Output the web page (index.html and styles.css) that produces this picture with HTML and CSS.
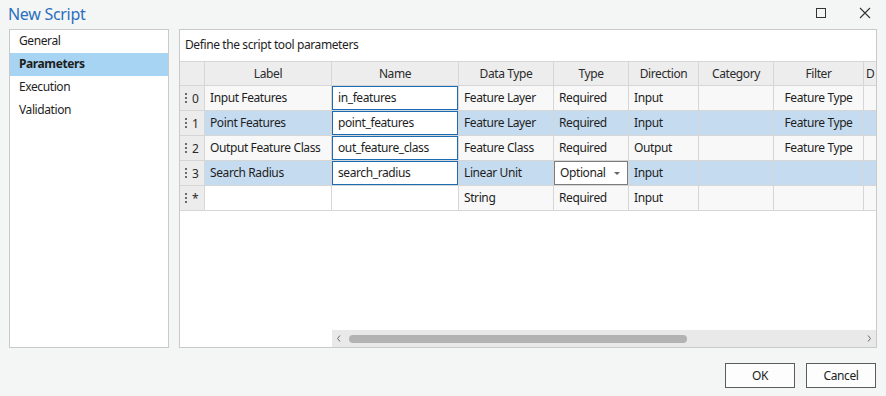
FILE: index.html
```html
<!DOCTYPE html>
<html lang="en">
<head>
  <meta charset="UTF-8">
  <title>New Script</title>
  <link rel="stylesheet" href="styles.css">
</head>
<body>

  <!-- Title bar -->
  <div class="titlebar">
    <div class="title">New Script</div>
    <div class="controls">
      <svg width="12" height="12" viewBox="0 0 12 12"><rect x="1.5" y="1.5" width="9" height="9" fill="none" stroke="#333" stroke-width="1"/></svg>
      <svg width="12" height="12" viewBox="0 0 12 12"><path d="M1 1 L11 11 M11 1 L1 11" stroke="#333" stroke-width="1.1"/></svg>
    </div>
  </div>

  <div class="main">
    <!-- Page list -->
    <div class="nav">
      <div class="nav-item">General</div>
      <div class="nav-item active">Parameters</div>
      <div class="nav-item">Execution</div>
      <div class="nav-item">Validation</div>
    </div>

    <!-- Parameters page -->
    <div class="panel">
      <div class="desc">Define the script tool parameters</div>
      <div class="grid-wrap">
        <div class="grid">
          <div class="hd"></div>
          <div class="hd">Label</div>
          <div class="hd">Name</div>
          <div class="hd">Data Type</div>
          <div class="hd">Type</div>
          <div class="hd">Direction</div>
          <div class="hd">Category</div>
          <div class="hd">Filter</div>
          <div class="hd left">D</div>

          <div class="handle"><span class="grip"></span>0</div>
          <div class="c">Input Features</div>
          <div class="c edit">in_features</div>
          <div class="c">Feature Layer</div>
          <div class="c">Required</div>
          <div class="c">Input</div>
          <div class="c"></div>
          <div class="c center">Feature Type</div>
          <div class="c"></div>

          <div class="handle"><span class="grip"></span>1</div>
          <div class="c sel">Point Features</div>
          <div class="c edit">point_features</div>
          <div class="c sel">Feature Layer</div>
          <div class="c sel">Required</div>
          <div class="c sel">Input</div>
          <div class="c sel"></div>
          <div class="c sel center">Feature Type</div>
          <div class="c sel"></div>

          <div class="handle"><span class="grip"></span>2</div>
          <div class="c">Output Feature Class</div>
          <div class="c edit">out_feature_class</div>
          <div class="c">Feature Class</div>
          <div class="c">Required</div>
          <div class="c">Output</div>
          <div class="c"></div>
          <div class="c center">Feature Type</div>
          <div class="c"></div>

          <div class="handle"><span class="grip"></span>3</div>
          <div class="c sel">Search Radius</div>
          <div class="c edit">search_radius</div>
          <div class="c sel">Linear Unit</div>
          <div class="c combo">Optional<span class="arrow"></span></div>
          <div class="c sel">Input</div>
          <div class="c sel"></div>
          <div class="c sel"></div>
          <div class="c sel"></div>

          <div class="handle"><span class="grip"></span>*</div>
          <div class="c blank"></div>
          <div class="c blank"></div>
          <div class="c">String</div>
          <div class="c">Required</div>
          <div class="c">Input</div>
          <div class="c"></div>
          <div class="c"></div>
          <div class="c"></div>
        </div>
      </div>
      <div class="hscroll">
        <div class="frozen"></div>
        <div class="track">
          <svg class="arr" width="14" height="17" viewBox="0 0 14 17"><path d="M8 5.5 L5.5 8.5 L8 11.5" fill="none" stroke="#666" stroke-width="1"/></svg>
          <div class="thumb-area"><div class="thumb"></div></div>
          <svg class="arr" width="14" height="17" viewBox="0 0 14 17"><path d="M6 5.5 L8.5 8.5 L6 11.5" fill="none" stroke="#666" stroke-width="1"/></svg>
        </div>
      </div>
    </div>
  </div>

  <!-- Buttons -->
  <div class="footer">
    <button class="btn">OK</button>
    <button class="btn">Cancel</button>
  </div>

</body>
</html>
```

FILE: styles.css
```css
body {
  margin: 0;
  width: 886px;
  height: 396px;
  background-color: #f4f6f5;
  font-family: "Noto Sans", "Open Sans", sans-serif;
  font-size: 12px;
  letter-spacing: -0.4px;
  color: #1e1e1e;
  overflow: hidden;
}

/* Title bar */
.titlebar {
  height: 29px;
  display: flex;
  align-items: center;
  justify-content: space-between;
  padding: 0 15px 0 8px;
}

.title {
  font-size: 16px;
  letter-spacing: -0.3px;
  color: #2a6fbd;
  margin-top: -2px;
}

.controls {
  display: flex;
  gap: 32px;
  margin-top: -4px;
}

/* Main area */
.main {
  display: flex;
  gap: 10px;
  padding: 0 9px;
  height: 319px;
}

.nav {
  width: 158px;
  border: 1px solid #c9c9c9;
  background: #fff;
}

.nav-item {
  height: 23px;
  line-height: 22px;
  padding-left: 9px;
}

.nav-item.active {
  background: #a6d4f2;
  font-weight: bold;
}

.panel {
  flex: 1;
  min-width: 0;
  border: 1px solid #c9c9c9;
  background: #fff;
  display: flex;
  flex-direction: column;
}

.desc {
  height: 31px;
  line-height: 30px;
  padding-left: 5px;
  border-bottom: 1px solid #d6d6d6;
}

/* Parameter grid */
.grid-wrap {
  flex: 1;
  overflow: hidden;
}

.grid {
  display: grid;
  grid-template-columns: 24px 126px 126px 94px 74px 69px 74px 89px 120px;
  grid-template-rows: 23px repeat(5, 24px);
  gap: 1px;
  background: #d6d6d6;
  border-bottom: 1px solid #d6d6d6;
  width: max-content;
}

.hd {
  background: #ededed;
  color: #2b2b2b;
  text-align: center;
  line-height: 23px;
  white-space: nowrap;
  overflow: hidden;
}

.hd.left {
  text-align: left;
  padding-left: 2px;
}

.handle {
  background: #ececec;
  display: flex;
  align-items: center;
  padding-left: 5px;
  gap: 5px;
  color: #2b2b2b;
}

.grip {
  width: 2px;
  height: 10px;
  background: repeating-linear-gradient(to bottom, #6b6b6b 0 2px, transparent 2px 4px);
}

.c {
  background: #f8f8f8;
  padding-left: 5px;
  line-height: 24px;
  white-space: nowrap;
  overflow: hidden;
  box-sizing: border-box;
}

.c.sel {
  background: #c5dbef;
}

.c.blank {
  background: #fff;
}

.c.center {
  text-align: center;
  padding-left: 0;
}

.c.edit {
  background: #fff;
  border: 1px solid #1c6bb5;
  line-height: 22px;
}

.c.combo {
  background: #fff;
  border: 1px solid #7c7c7c;
  line-height: 22px;
  position: relative;
}

.arrow {
  position: absolute;
  right: 7px;
  top: 10px;
  border-left: 3px solid transparent;
  border-right: 3px solid transparent;
  border-top: 3px solid #666;
}

/* Horizontal scrollbar */
.hscroll {
  height: 17px;
  display: flex;
}

.frozen {
  width: 152px;
}

.track {
  flex: 1;
  background: #e9e9e9;
  display: flex;
  align-items: center;
}

.arr {
  flex: none;
}

.thumb-area {
  flex: 1;
  padding-left: 3px;
}

.thumb {
  width: 338px;
  height: 8px;
  border-radius: 4px;
  background: #b3b3b3;
}

/* Footer buttons */
.footer {
  display: flex;
  justify-content: flex-end;
  gap: 11px;
  padding: 15px 10px 0 0;
}

.btn {
  width: 70px;
  height: 25px;
  background: #fdfdfd;
  border: 1px solid #5c5c5c;
  font-family: inherit;
  font-size: 12px;
  letter-spacing: inherit;
  color: #1e1e1e;
  padding: 0;
}
```
